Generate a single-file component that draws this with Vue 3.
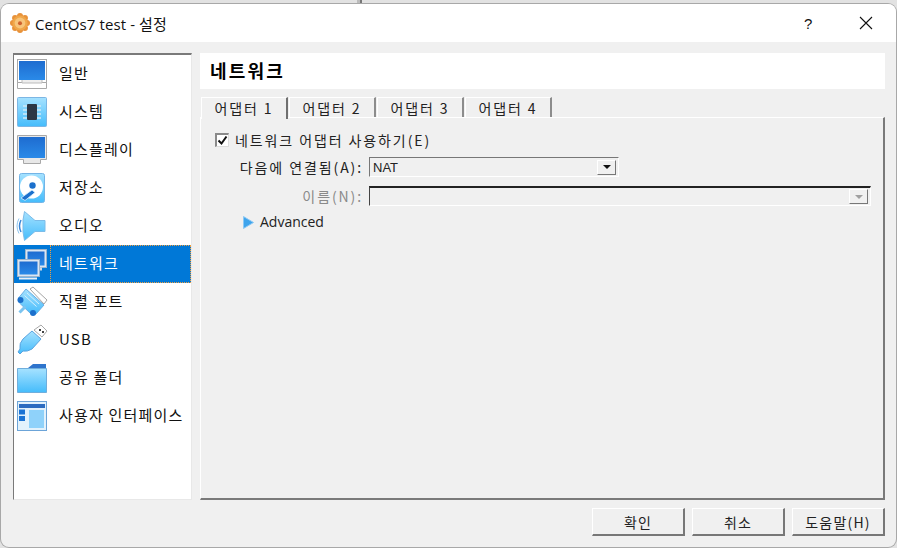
<script setup>
const items = [
  { key: 'general', label: '일반' },
  { key: 'system', label: '시스템' },
  { key: 'display', label: '디스플레이' },
  { key: 'storage', label: '저장소' },
  { key: 'audio', label: '오디오' },
  { key: 'network', label: '네트워크', active: true },
  { key: 'serial', label: '직렬 포트' },
  { key: 'usb', label: 'USB' },
  { key: 'shared', label: '공유 폴더' },
  { key: 'ui', label: '사용자 인터페이스' },
]
const tabs = ['어댑터 1', '어댑터 2', '어댑터 3', '어댑터 4']
const buttons = ['확인', '취소', '도움말(H)']
const lobes = [0, 45, 90, 135, 180, 225, 270, 315].map((a) => ({
  x: 10 + 7 * Math.cos((a * Math.PI) / 180),
  y: 10 + 7 * Math.sin((a * Math.PI) / 180),
}))
</script>

<template>
  <div class="page">
    <div class="window">
      <header class="titlebar">
        <svg class="logo" width="20" height="20" viewBox="0 0 20 20">
          <circle v-for="(l, i) in lobes" :key="i" :cx="l.x" :cy="l.y" r="3" fill="#e8923a"/>
          <circle cx="10" cy="10" r="7.600" fill="#f0a648"/>
          <circle cx="10" cy="10" r="5.400" fill="#f7c47a"/>
          <circle cx="10" cy="10.300" r="2" fill="#d0602c"/>
        </svg>
        <span class="title">CentOs7 test - 설정</span>
        <span class="help">?</span>
        <svg class="close" width="14" height="14" viewBox="0 0 14 14">
          <path d="M1 1l12 12M13 1L1 13" stroke="#111" stroke-width="1.100" fill="none"/>
        </svg>
      </header>

      <div class="body">
        <div class="main">
          <nav class="list">
            <div v-for="it in items" :key="it.key" class="item" :class="{ active: it.active }">
              <svg class="icon" width="32" height="32" viewBox="0 0 32 32">
                <defs>
                  <linearGradient :id="'b-' + it.key" x1="0" y1="0" x2="0" y2="1">
                    <stop offset="0" stop-color="#1e6cd0"/>
                    <stop offset="1" stop-color="#2a8ae8"/>
                  </linearGradient>
                  <linearGradient :id="'l-' + it.key" x1="0" y1="0" x2="0" y2="1">
                    <stop offset="0" stop-color="#a6e2ff"/>
                    <stop offset="1" stop-color="#45bcfb"/>
                  </linearGradient>
                </defs>
                <g v-if="it.key === 'general'">
                  <rect x="1.500" y="1.500" width="29" height="23" fill="#fff" stroke="#a8a8a8"/>
                  <rect x="3" y="3" width="26" height="19" :fill="`url(#b-${it.key})`"/>
                  <path d="M1.500 24.500h29v6h-29z" fill="#fff" stroke="#a8a8a8"/>
                  <path d="M6 22v3h20v-3" fill="#eee" stroke="#bbb"/>
                </g>
                <g v-else-if="it.key === 'system'">
                  <rect x="1.500" y="1.500" width="29" height="29" rx="1" :fill="`url(#l-${it.key})`" stroke="#7cb6e4"/>
                  <path d="M7 10h18M7 14h18M7 18h18M7 22h18" stroke="#cfeaf8" stroke-width="1.500"/>
                  <rect x="11" y="8" width="10" height="16" rx="1" fill="#2c3644"/>
                </g>
                <g v-else-if="it.key === 'display'">
                  <path d="M1.500 1.500h29v24h-6v4h-17v-4h-6z" fill="#e8e8e8" stroke="#a8a8a8"/>
                  <rect x="3" y="3" width="26" height="21" :fill="`url(#b-${it.key})`"/>
                </g>
                <g v-else-if="it.key === 'storage'">
                  <rect x="3.500" y="1.500" width="25" height="29" rx="2" :fill="`url(#l-${it.key})`" stroke="#74b4e6"/>
                  <circle cx="15.500" cy="15" r="11.500" fill="#fff"/>
                  <circle cx="16.500" cy="13.500" r="3.200" fill="#1c70cc"/>
                  <path d="M5 26l11-8 3 2.500-10 8z" fill="#1c70cc" stroke="#d8f0ff" stroke-width=".8"/>
                </g>
                <g v-else-if="it.key === 'audio'">
                  <path d="M8.500 1.500L19 10.500h10v11H19L8.500 30.500L7 22V10z" :fill="`url(#l-${it.key})`" stroke="#7cbce8"/>
                  <path d="M5 10q-3 6 0 12" fill="none" stroke="#3c86d6" stroke-width="1.500"/>
                  <path d="M3 8.500q-4 7.500 0 15" fill="none" stroke="#8cc4ee" stroke-width="1"/>
                </g>
                <g v-else-if="it.key === 'network'">
                  <rect x="9.500" y="1.500" width="21" height="18" fill="#dbe6f2" stroke="#9cb4cc"/>
                  <rect x="11.500" y="3.500" width="17" height="14" :fill="`url(#b-${it.key})`"/>
                  <path d="M23 19.500h3v3h-3z" fill="#cfd8e2"/>
                  <rect x="1.500" y="11.500" width="22" height="17" fill="#dbe6f2" stroke="#9cb4cc"/>
                  <rect x="3.500" y="13.500" width="18" height="13" :fill="`url(#b-${it.key})`"/>
                  <path d="M3 30.500h18" stroke="#e8f0f8" stroke-width="2"/>
                </g>
                <g v-else-if="it.key === 'serial'">
                  <path d="M14 3l3-2 14 13-3 4z" fill="#fff" stroke="#a4a4a4"/>
                  <path d="M10 3l18 16-8 9q-3 1-6-1L3.500 17q-2-3-1-5z" :fill="`url(#l-${it.key})`" stroke="#68aee4"/>
                  <path d="M11 7l12 11M8.500 9.500l12 11" stroke="#d6f0fc" stroke-width="1"/>
                  <circle cx="4.500" cy="14" r="3" fill="#1c70cc"/>
                  <circle cx="17" cy="27" r="3" fill="#1c70cc"/>
                  <path d="M9.500 20.500l-6 6" stroke="#7cc4f0" stroke-width="3"/>
                </g>
                <g v-else-if="it.key === 'usb'">
                  <path d="M18 6l7-5 6 6-5 6z" fill="#fff" stroke="#a8a8a8"/>
                  <rect x="23" y="5" width="2" height="2" fill="#444"/>
                  <rect x="26" y="7" width="2" height="2" fill="#444"/>
                  <path d="M16 7l9 8-9 10q-5 3-9 2l-3 3-2-2 2-3q-1-6 3-10z" :fill="`url(#l-${it.key})`" stroke="#5aa4e0"/>
                </g>
                <g v-else-if="it.key === 'shared'">
                  <path d="M12 6l5-4h13v6H12z" fill="#2e74cc"/>
                  <path d="M1.500 6.500h29v24h-29z" :fill="`url(#l-${it.key})`" stroke="#70aedc"/>
                </g>
                <g v-else>
                  <rect x="1.500" y="1.500" width="29" height="29" fill="#e2f2fc" stroke="#6ca4d8"/>
                  <rect x="3" y="4" width="26" height="4" fill="#2c6cc0"/>
                  <rect x="3" y="9.500" width="6" height="5" fill="#1c74d4"/>
                  <rect x="3" y="16" width="6" height="5" fill="#1c74d4"/>
                  <rect x="13" y="10" width="15" height="18" fill="#8fd2fa"/>
                </g>
              </svg>
              <span class="label">{{ it.label }}</span>
            </div>
          </nav>

          <section class="content">
            <h1 class="heading">네트워크</h1>
            <div class="tabs">
              <div v-for="(t, i) in tabs" :key="t" class="tab" :class="{ current: i === 0 }">{{ t }}</div>
            </div>
            <div class="panel">
              <label class="check-row">
                <span class="check">
                  <svg width="11" height="11" viewBox="0 0 11 11"><path d="M1.500 5.500l3 3 5-7" fill="none" stroke="#111" stroke-width="2"/></svg>
                </span>
                <span class="ko">네트워크 어댑터 사용하기(E)</span>
              </label>
              <div class="form">
                <span class="form-label ko">다음에 연결됨(A):</span>
                <div class="combo combo-short">
                  <span class="combo-text">NAT</span>
                  <span class="combo-btn"><i class="arrow"></i></span>
                </div>
                <span class="form-label ko muted">이름(N):</span>
                <div class="combo combo-off">
                  <span class="combo-text"></span>
                  <span class="combo-btn"><i class="arrow off"></i></span>
                </div>
              </div>
              <div class="advanced">
                <svg width="11" height="13" viewBox="0 0 11 13">
                  <path d="M.5.500l10 6-10 6z" fill="#3ea4ec" stroke="#8cc8f4"/>
                </svg>
                <span>Advanced</span>
              </div>
            </div>
          </section>
        </div>

        <footer class="footer">
          <button v-for="b in buttons" :key="b" class="btn">{{ b }}</button>
        </footer>
      </div>
    </div>
  </div>
</template>

<style>
html, body { margin: 0; background: #e2e2e2; }
</style>

<style scoped>
.page {
  width: 897px;
  height: 548px;
  box-sizing: border-box;
  padding: 4px 1px 1px 1px;
  background: linear-gradient(90deg, transparent 357px, #bcbcbc 357px, #bcbcbc 360px, #777 360px, #777 362px, transparent 362px) #e2e2e2;
  overflow: hidden;
  font-family: "Noto Sans CJK KR", "Noto Sans", sans-serif;
  color: #111;
}
.window {
  height: 100%;
  display: flex;
  flex-direction: column;
  border-radius: 8px;
  overflow: hidden;
  box-shadow: 0 0 0 1px #a8a8a8;
  background: #f0f0f0;
}
.titlebar {
  height: 38px;
  flex: none;
  background: #fff;
  display: flex;
  align-items: center;
  padding-left: 9px;
}
.logo { flex: none; }
.title {
  margin-left: 5px;
  font-family: "Open Sans", "Noto Sans CJK KR", sans-serif;
  font-size: 15px;
  letter-spacing: .1px;
  color: #111;
}
.help {
  margin-left: auto;
  font-family: "Liberation Sans", sans-serif;
  font-size: 15px;
  width: 14px;
}
.close { margin-left: 41px; margin-right: 23px; }
.body {
  flex: 1;
  display: flex;
  flex-direction: column;
  padding: 11px 11px 10px 12px;
  min-height: 0;
}
.main {
  height: 447px;
  display: flex;
  gap: 8px;
}
.list {
  width: 179px;
  box-sizing: border-box;
  background: #fff;
  border-top: 2px solid #7a7a7a;
  border-left: 1px solid #7a7a7a;
  border-right: 1px solid #e8e8e8;
  border-bottom: 1px solid #e8e8e8;
  flex: none;
}
.item {
  height: 38px;
  display: flex;
  align-items: center;
  padding-left: 2px;
  position: relative;
}
.icon { flex: none; }
.label {
  margin-left: 11px;
  margin-bottom: 3px;
  font-size: 15px;
  letter-spacing: 1.200px;
  line-height: 1;
  color: #111;
}
.item.active { background: #0078d7; }
.item.active .label { color: #fff; }
.item.active::after {
  content: "";
  position: absolute;
  left: 36px;
  right: 0;
  top: 0;
  bottom: 0;
  border: 1px dotted #f0a040;
}
.content {
  flex: 1;
  display: flex;
  flex-direction: column;
  min-width: 0;
}
.heading {
  margin: 0;
  height: 36px;
  flex: none;
  box-sizing: border-box;
  background: #fff;
  padding-left: 10px;
  font-size: 18px;
  font-weight: 700;
  line-height: 34px;
  letter-spacing: 2.200px;
  color: #000;
}
.tabs {
  display: flex;
  margin-top: 8px;
  padding-left: 1px;
  height: 20px;
  flex: none;
  position: relative;
  z-index: 1;
}
.tab {
  width: 87px;
  margin-right: 1px;
  box-sizing: border-box;
  border-top: 1px solid #fff;
  border-left: 1px solid #fff;
  border-right: 2px solid #8c8c8c;
  text-align: center;
  font-size: 14px;
  line-height: 20px;
  letter-spacing: 1.900px;
  color: #222;
}
.tab.current { height: 22px; background: #f0f0f0; border-right-color: #707070; }
.panel {
  flex: 1;
  box-sizing: border-box;
  border-top: 1px solid #fff;
  border-left: 1px solid #fff;
  border-right: 2px solid #7a7a7a;
  border-bottom: 2px solid #7a7a7a;
  padding: 14px 0 0 14px;
}
.ko {
  font-size: 14px;
  letter-spacing: 1.900px;
  line-height: 16px;
  color: #222;
}
.check-row {
  display: flex;
  align-items: center;
  gap: 6px;
  height: 16px;
}
.check {
  width: 14px;
  height: 14px;
  box-sizing: border-box;
  background: #fff;
  border-top: 2px solid #8a8a8a;
  border-left: 2px solid #8a8a8a;
  border-right: 1px solid #ddd;
  border-bottom: 1px solid #ddd;
  display: flex;
  align-items: center;
  justify-content: center;
}
.form {
  margin-top: 9px;
  display: grid;
  grid-template-columns: 146px 502px;
  column-gap: 8px;
  row-gap: 9px;
  align-items: center;
}
.form-label { text-align: right; margin-right: -2px; }
.muted { color: #8a8a8a; }
.combo {
  height: 20px;
  box-sizing: border-box;
  display: flex;
  align-items: center;
  justify-content: space-between;
  border-top: 1px solid #777;
  border-left: 1px solid #777;
  border-right: 1px solid #fff;
  border-bottom: 1px solid #fff;
  padding: 2px;
}
.combo-short { width: 250px; }
.combo-off { border-top: 2px solid #222; border-left-color: #444; }
.combo-text {
  font-family: "Liberation Sans", sans-serif;
  font-size: 13px;
  color: #222;
  margin-left: 1px;
  padding-top: 1px;
}
.combo-btn {
  width: 19px;
  height: 15px;
  box-sizing: border-box;
  border-top: 1px solid #fff;
  border-left: 1px solid #fff;
  border-right: 1px solid #777;
  border-bottom: 1px solid #777;
  display: flex;
  align-items: center;
  justify-content: center;
}
.arrow {
  width: 0;
  height: 0;
  border-left: 4px solid transparent;
  border-right: 4px solid transparent;
  border-top: 4px solid #111;
}
.arrow.off { border-top-color: #a0a0a0; }
.advanced {
  margin-top: 8px;
  margin-left: 28px;
  display: flex;
  align-items: center;
  gap: 6px;
  font-family: "Open Sans", "Liberation Sans", sans-serif;
  font-size: 14px;
  line-height: 16px;
  color: #222;
}
.footer {
  margin-top: 8px;
  display: flex;
  justify-content: flex-end;
  gap: 7px;
}
.btn {
  width: 93px;
  height: 28px;
  box-sizing: border-box;
  background: #f0f0f0;
  border-top: 1px solid #fff;
  border-left: 1px solid #fff;
  border-right: 2px solid #777;
  border-bottom: 2px solid #777;
  padding: 1px 0 0;
  font-family: "Noto Sans CJK KR", sans-serif;
  font-size: 14px;
  letter-spacing: 1.200px;
  color: #222;
}
</style>
